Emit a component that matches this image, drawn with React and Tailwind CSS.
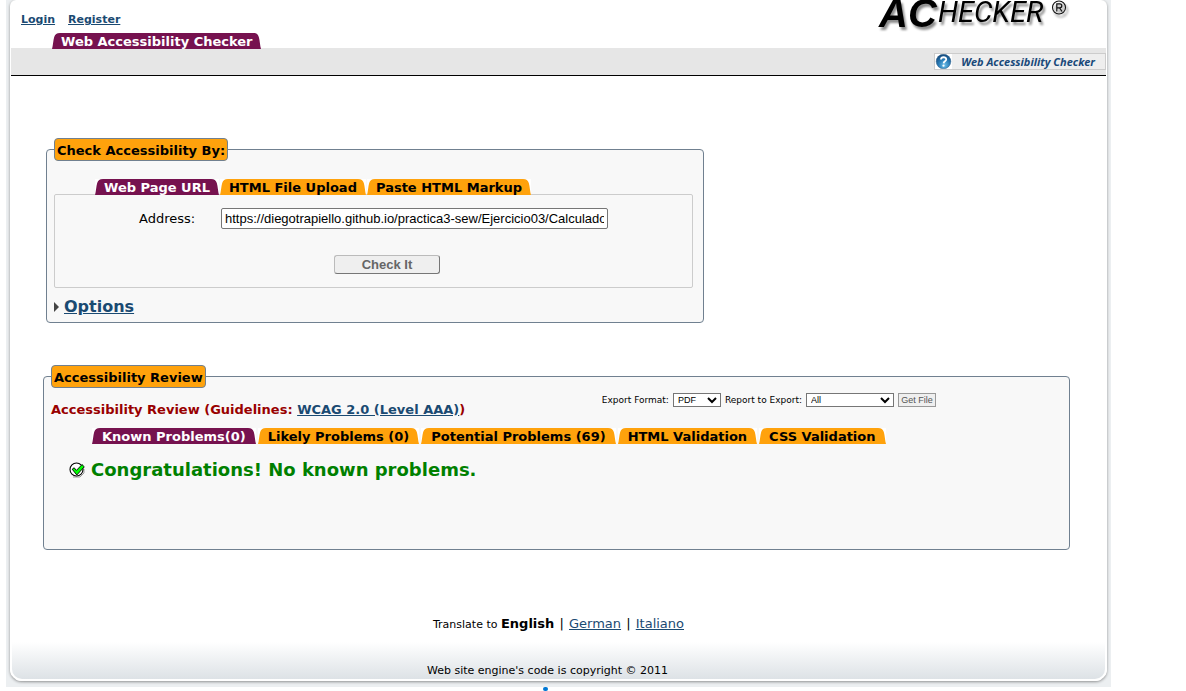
import React from "react";

const sans = "font-['Verdana','DejaVu_Sans',sans-serif]";

function Tab({ children, active = false, roomy = false }) {
  const fill = active ? "fill-[#76124f]" : "fill-[#ffa20c]";
  const label = active ? "bg-[#76124f] text-white" : "bg-[#ffa20c] text-black";
  return (
    <button type="button" className="flex h-4 bg-white text-[13px] leading-[18px] font-bold whitespace-nowrap">
      <svg viewBox="0 0 8 16" className={`h-4 w-2 shrink-0 ${fill}`} aria-hidden="true">
        <path d="M0 16 C1 13 1.2 7 2.2 4 C3.2 1.2 4.5 0 8 0 V16 Z" />
      </svg>
      <span className={`h-4 ${roomy ? "px-[2px]" : "px-px"} ${label}`}>{children}</span>
      <svg viewBox="0 0 8 16" className={`h-4 w-2 shrink-0 ${fill}`} aria-hidden="true">
        <path d="M8 16 C7 13 6.8 7 5.8 4 C4.8 1.2 3.5 0 0 0 V16 Z" />
      </svg>
    </button>
  );
}

function Legend({ children }) {
  return (
    <legend className="h-[23px] rounded-[4px] border border-[#708090] bg-[#ffa20c] px-[2px] text-[13px] leading-[23px] font-bold">
      {children}
    </legend>
  );
}

function Logo() {
  return (
    <svg
      viewBox="0 0 194 36"
      className="h-9 w-[194px] [filter:drop-shadow(2px_3px_1px_rgba(0,0,0,0.45))]"
      role="img"
      aria-label="AChecker"
    >
      <text x="2" y="27" className="font-['Liberation_Sans',sans-serif] text-[40px] font-bold italic">AC</text>
      <text x="61" y="22" className="font-['Roboto',sans-serif] text-[29px] font-normal italic">HECKER</text>
      <circle cx="182" cy="7.5" r="6.5" fill="none" stroke="#111" strokeWidth="1.1" />
      <path d="M179.8 11.5 V3.8 H182.8 A2 2 0 0 1 182.8 7.8 H179.8 M182.6 7.8 L185 11.5" fill="none" stroke="#111" strokeWidth="1.2" />
    </svg>
  );
}

function HelpIcon() {
  return (
    <svg viewBox="0 0 18 16" className="h-[15px] w-[17px]" aria-hidden="true">
      <defs>
        <radialGradient id="help" cx="0.55" cy="0.75" r="0.8">
          <stop offset="0" stopColor="#6cc0ea" />
          <stop offset="0.5" stopColor="#2779b4" />
          <stop offset="1" stopColor="#123f70" />
        </radialGradient>
      </defs>
      <rect width="18" height="16" fill="#fff" />
      <circle cx="9" cy="8" r="7.8" fill="url(#help)" stroke="#245580" strokeWidth="0.5" />
      <path d="M6.3 5.8 C6.5 2.6 12 2.8 11.9 5.8 C11.8 7.8 9.2 7.8 9.1 10" fill="none" stroke="#fff" strokeWidth="1.9" />
      <circle cx="9" cy="12.5" r="1.2" fill="#fff" />
    </svg>
  );
}

function CheckIcon() {
  return (
    <svg viewBox="0 0 16 16" className="h-4 w-4" aria-hidden="true">
      <path d="M4 15 H11 L15 11 V7" fill="none" stroke="#999" strokeWidth="1" />
      <circle cx="7.5" cy="7.5" r="6.5" fill="#fff" stroke="#000" strokeWidth="1.1" />
      <path d="M3.2 7.2 L5.2 5.8 L7.4 8.4 L13 2.6 L15.3 4.8 L7.8 13 Z" fill="#0f0" stroke="#000" strokeWidth="0.9" />
    </svg>
  );
}

export default function App() {
  const link = "text-[#1a4a72] underline";
  return (
    <div className={`mr-[75px] ml-[6px] ${sans} text-black`}>
      <div className="bg-[#eceff1] px-1 pb-[6px]">
        <div className="overflow-hidden rounded-t-[6px] rounded-b-xl bg-white shadow-[0_1px_3px_rgba(0,0,0,0.4)]">
          <header className="px-px">
            <div className="flex justify-between">
              <div>
                <nav className="flex h-[33px] gap-[13px] pt-[13px] pl-[10px] text-[11px] leading-[14px] font-bold">
                  <a href="#login" className={link}>Login</a>
                  <a href="#register" className={link}>Register</a>
                </nav>
                <div className="relative -mb-px flex pl-[41px]">
                  <Tab active>Web Accessibility Checker</Tab>
                </div>
              </div>
              <div className="h-12 pr-[35px]">
                <Logo />
              </div>
            </div>
            <div className="flex h-7 items-center justify-end border-b border-black bg-[#e6e6e6]">
              <a
                href="#help"
                className="flex h-[17px] items-center gap-[9px] border border-[#ccc] bg-[#eee] pr-[10px] font-['Noto_Sans',sans-serif] text-[11px] leading-[15px] font-bold text-[#1a4a7a] italic"
              >
                <HelpIcon />
                Web Accessibility Checker
              </a>
            </div>
          </header>

          <main className="pt-[62px]">
            <form className="ml-9 w-3/5" onSubmit={(e) => e.preventDefault()}>
              <fieldset className="rounded-[4px] border border-[#708090] bg-[#f8f8f8] pr-[10px] pb-[6px] pl-[7px]">
                <Legend>Check Accessibility By:</Legend>
                <div className="relative mt-[18px] -mb-px flex gap-px pl-[41px]">
                  <Tab active>Web Page URL</Tab>
                  <Tab>HTML File Upload</Tab>
                  <Tab>Paste HTML Markup</Tab>
                </div>
                <div className="h-[94px] rounded-[2px] border border-[#ccc] pt-[13px]">
                  <div className="flex items-center pl-[84px]">
                    <label htmlFor="address" className="w-[82px] text-[13px]">Address:</label>
                    <input
                      id="address"
                      type="text"
                      defaultValue="https://diegotrapiello.github.io/practica3-sew/Ejercicio03/Calculadora"
                      className="h-[21px] w-[387px] rounded-[2px] border border-[#767676] bg-white px-[3px] font-['Liberation_Sans',Arial,sans-serif] text-[13px]"
                    />
                  </div>
                  <button
                    type="submit"
                    className="mt-[26px] ml-[279px] block h-[19px] w-[106px] rounded-[3px] border border-t-[#bbb] border-r-[#767676] border-b-[#767676] border-l-[#bbb] bg-[#efefef] font-['Liberation_Sans',Arial,sans-serif] text-[13px] leading-4 font-bold text-[#666]"
                  >
                    Check It
                  </button>
                </div>
                <div className="mt-[10px] flex items-center gap-[5px]">
                  <svg viewBox="0 0 5 10" className="h-[10px] w-[5px]" aria-hidden="true">
                    <path d="M0 0 L5 5 L0 10 Z" fill="#444" />
                  </svg>
                  <a href="#options" className={`text-base leading-[18px] font-bold ${link}`}>Options</a>
                </div>
              </fieldset>
            </form>

            <fieldset className="mt-[42px] mr-[37px] ml-[33px] h-[185px] rounded-[4px] border border-[#708090] bg-[#f8f8f8] px-[7px]">
              <Legend>Accessibility Review</Legend>
              <div className="flex h-10 items-start justify-between pr-[126px]">
                <h2 className="pt-[14px] text-[13px] leading-4 font-bold text-[#990000]">
                  Accessibility Review (Guidelines: <a href="#wcag" className={link}>WCAG 2.0 (Level AAA)</a>)
                </h2>
                <div className="flex items-center gap-1 pt-[5px] text-[9px] leading-[14px]">
                  <label htmlFor="format">Export Format:</label>
                  <select id="format" className="h-[14px] w-12 border border-[#767676] bg-white font-['Liberation_Sans',Arial,sans-serif]">
                    <option>PDF</option>
                  </select>
                  <label htmlFor="report">Report to Export:</label>
                  <select id="report" className="h-[14px] w-[88px] border border-[#767676] bg-white font-['Liberation_Sans',Arial,sans-serif]">
                    <option>All</option>
                  </select>
                  <button type="button" className="h-[14px] w-[38px] border border-[#999] bg-[#efefef] font-['Liberation_Sans',Arial,sans-serif] leading-3 whitespace-nowrap text-[#555]">
                    Get File
                  </button>
                </div>
              </div>
              <div className="flex gap-[2px] pl-[41px]">
                <Tab roomy active>Known Problems(0)</Tab>
                <Tab roomy>Likely Problems (0)</Tab>
                <Tab roomy>Potential Problems (69)</Tab>
                <Tab roomy>HTML Validation</Tab>
                <Tab roomy>CSS Validation</Tab>
              </div>
              <p className="mt-[15px] flex items-center gap-[6px] pl-[18px] text-[18px] leading-[22px] font-bold text-[#008000]">
                <CheckIcon />
                Congratulations! No known problems.
              </p>
            </fieldset>
          </main>

          <footer className="mt-[66px] text-center">
            <p className="text-[13px] leading-4">
              <span className="text-[11px]">Translate to </span>
              <strong>English</strong> <span className="px-px">|</span> <a href="#german" className={link}>German</a>{" "}
              <span className="px-px">|</span> <a href="#italiano" className={link}>Italiano</a>
            </p>
            <div className="mt-[9px] border-2 border-t-0 border-white">
              <p className="rounded-b-[10px] bg-linear-to-b from-white to-[#dde2e6] pt-[22px] pr-[22px] pb-px text-[11px] leading-[14px]">
                Web site engine's code is copyright © 2011
              </p>
            </div>
          </footer>
        </div>
      </div>
      <div className="flex justify-center pr-[26px]">
        <span className="h-1 w-[5px] rounded-full bg-[#0078d4]" />
      </div>
    </div>
  );
}
